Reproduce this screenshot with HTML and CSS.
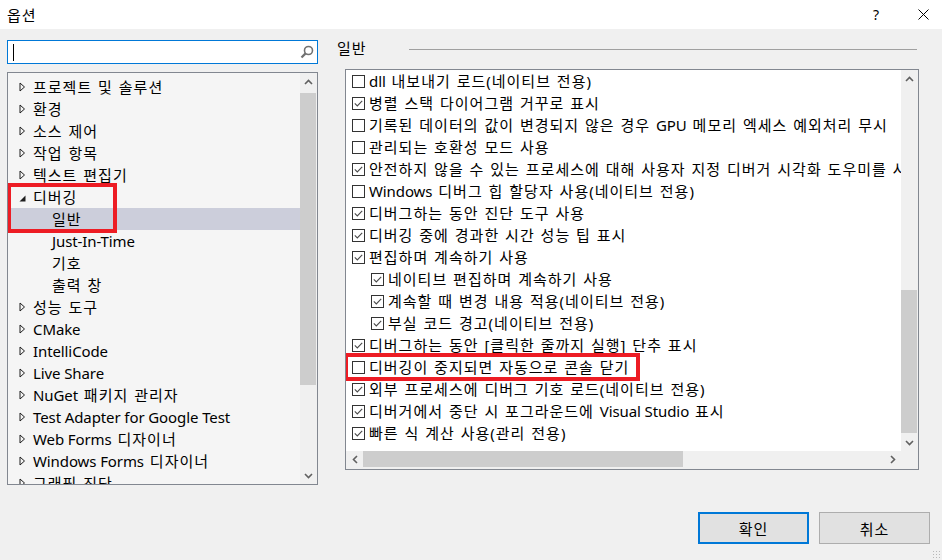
FILE: index.html
```html
<!DOCTYPE html>
<html lang="ko">
<head>
  <meta charset="UTF-8" />
  <title>옵션</title>
  <link rel="stylesheet" href="styles.css">
</head>
<body>
  <svg class="defs" width="0" height="0">
    <symbol id="cb-on" viewBox="0 0 13 13">
      <rect x="0.5" y="0.5" width="12" height="12" fill="#fff" stroke="#333"/>
      <polyline points="2.8,6.4 5.3,8.9 10.2,3.8" fill="none" stroke="#4a4a4a" stroke-width="1.1"/>
    </symbol>
    <symbol id="cb-off" viewBox="0 0 13 13">
      <rect x="0.5" y="0.5" width="12" height="12" fill="#fff" stroke="#333"/>
    </symbol>
    <symbol id="tw-closed" viewBox="0 0 7 10">
      <polygon points="1,1 5.5,5 1,9" fill="none" stroke="#1e1e1e"/>
    </symbol>
    <symbol id="tw-open" viewBox="0 0 7 7">
      <polygon points="6.5,0.5 6.5,6.5 0.5,6.5" fill="#1e1e1e"/>
    </symbol>
    <symbol id="chev-up" viewBox="0 0 9 6">
      <polyline points="1,5 4.5,1.5 8,5" fill="none" stroke="#606060" stroke-width="1.6"/>
    </symbol>
    <symbol id="chev-down" viewBox="0 0 9 6">
      <polyline points="1,1 4.5,4.5 8,1" fill="none" stroke="#606060" stroke-width="1.6"/>
    </symbol>
    <symbol id="chev-left" viewBox="0 0 6 9">
      <polyline points="5,1 1.5,4.5 5,8" fill="none" stroke="#606060" stroke-width="1.6"/>
    </symbol>
    <symbol id="chev-right" viewBox="0 0 6 9">
      <polyline points="1,1 4.5,4.5 1,8" fill="none" stroke="#606060" stroke-width="1.6"/>
    </symbol>
  </svg>

  <div class="titlebar">
    <span class="title">옵션</span>
    <span class="help">?</span>
    <span class="close">
      <svg width="11" height="11" viewBox="0 0 11 11"><path d="M0.5 0.5 L10.5 10.5 M10.5 0.5 L0.5 10.5" stroke="#000" stroke-width="1"/></svg>
    </span>
  </div>

  <div class="main">
    <!-- left: search + tree -->
    <div class="left">
      <div class="search">
        <span class="caret"></span>
        <svg class="search-icon" width="14" height="14" viewBox="0 0 14 14">
          <circle cx="8.5" cy="5.5" r="4" fill="none" stroke="#717171" stroke-width="1.6"/>
          <path d="M5.6 8.4 L1.5 12.5" stroke="#717171" stroke-width="2.2"/>
        </svg>
      </div>

      <div class="tree">
        <div class="tree-items">
          <div class="node"><svg class="tw"><use href="#tw-closed"/></svg>프로젝트 및 솔루션</div>
          <div class="node"><svg class="tw"><use href="#tw-closed"/></svg>환경</div>
          <div class="node"><svg class="tw"><use href="#tw-closed"/></svg>소스 제어</div>
          <div class="node"><svg class="tw"><use href="#tw-closed"/></svg>작업 항목</div>
          <div class="node"><svg class="tw"><use href="#tw-closed"/></svg>텍스트 편집기</div>
          <div class="node"><svg class="tw open"><use href="#tw-open"/></svg>디버깅</div>
          <div class="node child selected">일반</div>
          <div class="node child"><span class="en">Just-In-Time</span></div>
          <div class="node child">기호</div>
          <div class="node child">출력 창</div>
          <div class="node"><svg class="tw"><use href="#tw-closed"/></svg>성능 도구</div>
          <div class="node"><svg class="tw"><use href="#tw-closed"/></svg><span class="en">CMake</span></div>
          <div class="node"><svg class="tw"><use href="#tw-closed"/></svg><span class="en">IntelliCode</span></div>
          <div class="node"><svg class="tw"><use href="#tw-closed"/></svg><span class="en">Live Share</span></div>
          <div class="node"><svg class="tw"><use href="#tw-closed"/></svg><span class="en">NuGet</span>&nbsp;패키지 관리자</div>
          <div class="node"><svg class="tw"><use href="#tw-closed"/></svg><span class="en">Test Adapter for Google Test</span></div>
          <div class="node"><svg class="tw"><use href="#tw-closed"/></svg><span class="en">Web Forms</span>&nbsp;디자이너</div>
          <div class="node"><svg class="tw"><use href="#tw-closed"/></svg><span class="en">Windows Forms</span>&nbsp;디자이너</div>
          <div class="node"><svg class="tw"><use href="#tw-closed"/></svg>그래픽 진단</div>
          <div class="mark tree-mark"></div>
        </div>
        <div class="vscroll">
          <div class="sbtn"><svg class="chev-v"><use href="#chev-up"/></svg></div>
          <div class="track"><div class="thumb tree-thumb"></div></div>
          <div class="sbtn"><svg class="chev-v"><use href="#chev-down"/></svg></div>
        </div>
      </div>
    </div>

    <!-- right: options page -->
    <div class="right">
      <div class="heading">
        <span>일반</span>
        <div class="rule"></div>
      </div>

      <div class="list">
        <div class="list-items">
          <div class="opt"><svg class="cb"><use href="#cb-off"/></svg><span class="en">dll</span>&nbsp;내보내기 로드(네이티브 전용)</div>
          <div class="opt"><svg class="cb"><use href="#cb-on"/></svg>병렬 스택 다이어그램 거꾸로 표시</div>
          <div class="opt"><svg class="cb"><use href="#cb-off"/></svg>기록된 데이터의 값이 변경되지 않은 경우&nbsp;<span class="en">GPU</span>&nbsp;메모리 엑세스 예외처리 무시</div>
          <div class="opt"><svg class="cb"><use href="#cb-off"/></svg>관리되는 호환성 모드 사용</div>
          <div class="opt"><svg class="cb"><use href="#cb-on"/></svg>안전하지 않을 수 있는 프로세스에 대해 사용자 지정 디버거 시각화 도우미를 사용</div>
          <div class="opt"><svg class="cb"><use href="#cb-off"/></svg><span class="en">Windows</span>&nbsp;디버그 힙 할당자 사용(네이티브 전용)</div>
          <div class="opt"><svg class="cb"><use href="#cb-on"/></svg>디버그하는 동안 진단 도구 사용</div>
          <div class="opt"><svg class="cb"><use href="#cb-on"/></svg>디버깅 중에 경과한 시간 성능 팁 표시</div>
          <div class="opt"><svg class="cb"><use href="#cb-on"/></svg>편집하며 계속하기 사용</div>
          <div class="opt sub"><svg class="cb"><use href="#cb-on"/></svg>네이티브 편집하며 계속하기 사용</div>
          <div class="opt sub"><svg class="cb"><use href="#cb-on"/></svg>계속할 때 변경 내용 적용(네이티브 전용)</div>
          <div class="opt sub"><svg class="cb"><use href="#cb-on"/></svg>부실 코드 경고(네이티브 전용)</div>
          <div class="opt"><svg class="cb"><use href="#cb-on"/></svg>디버그하는 동안 [클릭한 줄까지 실행] 단추 표시</div>
          <div class="opt"><svg class="cb"><use href="#cb-off"/></svg>디버깅이 중지되면 자동으로 콘솔 닫기</div>
          <div class="opt"><svg class="cb"><use href="#cb-on"/></svg>외부 프로세스에 디버그 기호 로드(네이티브 전용)</div>
          <div class="opt"><svg class="cb"><use href="#cb-on"/></svg>디버거에서 중단 시 포그라운드에&nbsp;<span class="en">Visual Studio</span>&nbsp;표시</div>
          <div class="opt"><svg class="cb"><use href="#cb-on"/></svg>빠른 식 계산 사용(관리 전용)</div>
          <div class="mark list-mark"></div>
        </div>
        <div class="vscroll">
          <div class="sbtn"><svg class="chev-v"><use href="#chev-up"/></svg></div>
          <div class="track"><div class="thumb list-thumb"></div></div>
          <div class="sbtn"><svg class="chev-v"><use href="#chev-down"/></svg></div>
        </div>
        <div class="hscroll">
          <div class="sbtn"><svg class="chev-h"><use href="#chev-left"/></svg></div>
          <div class="htrack"><div class="hthumb"></div></div>
          <div class="sbtn"><svg class="chev-h"><use href="#chev-right"/></svg></div>
        </div>
        <div class="corner"></div>
      </div>
    </div>
  </div>

  <div class="footer">
    <button class="btn primary">확인</button>
    <button class="btn">취소</button>
  </div>
  <div class="grip"></div>
</body>
</html>
```

FILE: styles.css
```css
* {
  box-sizing: border-box;
}

html, body {
  margin: 0;
  padding: 0;
}

body {
  width: 942px;
  height: 560px;
  overflow: hidden;
  position: relative;
  background: #f0f0f0;
  color: #000;
  font-family: "Noto Sans", "Noto Sans CJK KR", sans-serif;
  font-size: 15px;
  letter-spacing: 1px;
  word-spacing: 1px;
}

/* latin runs are set tighter than the hangul around them */
.en {
  letter-spacing: -0.1px;
  word-spacing: 0;
}

.defs {
  position: absolute;
  width: 0;
  height: 0;
}

/* title bar */
.titlebar {
  height: 29px;
  background: #fff;
  display: flex;
  align-items: center;
  padding-left: 7px;
}

.title {
  line-height: 16px;
}

.help {
  margin-left: auto;
  font-size: 14px;
  line-height: 16px;
  width: 10px;
  margin-right: 35px;
}

.close {
  width: 11px;
  height: 11px;
  margin-right: 13px;
  display: flex;
}

/* main area */
.main {
  display: flex;
  padding: 11px 0 0 7px;
}

.left {
  width: 311px;
}

.search {
  height: 24px;
  background: #fff;
  border: 1px solid #0078d7;
  display: flex;
  align-items: center;
  padding-left: 5px;
  padding-right: 3px;
}

.caret {
  width: 1px;
  height: 17px;
  background: #000;
}

.search-icon {
  margin-left: auto;
}

.tree {
  margin-top: 8px;
  height: 413px;
  border: 1px solid #828790;
  background: #f5f5f5;
  display: flex;
}

.tree-items {
  flex: 1;
  padding-top: 3px;
  position: relative;
  overflow: hidden;
}

.node {
  height: 22px;
  line-height: 22px;
  padding-left: 25px;
  white-space: nowrap;
  display: flex;
  align-items: center;
}

.node .tw {
  width: 7px;
  height: 10px;
  margin-left: -14px;
  margin-right: 7px;
}

.node .tw.open {
  width: 7px;
  height: 7px;
  margin-top: 3px;
}

.node.child {
  padding-left: 44px;
}

.node.selected {
  background: #cccedb;
}

/* red highlight frames */
.mark {
  position: absolute;
  border: 4px solid #ed1c24;
}

.tree-mark {
  left: -1px;
  top: 110px;
  width: 110px;
  height: 50px;
}

.list-mark {
  left: -2px;
  top: 283px;
  width: 296px;
  height: 28px;
}

/* scrollbars */
.vscroll {
  width: 17px;
  background: #f0f0f0;
  display: flex;
  flex-direction: column;
}

.sbtn {
  width: 17px;
  height: 17px;
  display: flex;
  align-items: center;
  justify-content: center;
  flex: none;
}

.chev-v {
  width: 9px;
  height: 6px;
}

.chev-h {
  width: 6px;
  height: 9px;
}

.track {
  flex: 1;
  position: relative;
}

.thumb {
  position: absolute;
  left: 0;
  right: 1px;
  background: #cdcdcd;
}

.tree-thumb {
  top: 3px;
  height: 292px;
}

.list-thumb {
  top: 203px;
  height: 143px;
}

/* options list */
.right {
  margin-left: 19px;
}

.heading {
  display: flex;
  align-items: center;
  height: 16px;
  line-height: 16px;
}

.rule {
  width: 508px;
  height: 1px;
  background: #a0a0a0;
  margin-left: 42px;
  margin-top: 2px;
}

.list {
  margin-top: 13px;
  margin-left: 8px;
  width: 574px;
  height: 401px;
  border: 1px solid #828790;
  display: grid;
  grid-template-columns: 555px 17px;
  grid-template-rows: 381px 17px;
  background: #f0f0f0;
}

.list-items {
  background: #fff;
  position: relative;
  overflow: hidden;
}

.opt {
  height: 22px;
  line-height: 22px;
  padding-left: 6px;
  white-space: nowrap;
  display: flex;
  align-items: center;
}

.opt.sub {
  padding-left: 25px;
}

.cb {
  width: 13px;
  height: 13px;
  flex: none;
  margin-right: 4px;
}

.hscroll {
  display: flex;
  background: #f0f0f0;
}

.htrack {
  flex: 1;
  position: relative;
}

.hthumb {
  position: absolute;
  top: 0;
  bottom: 1px;
  left: 0;
  width: 320px;
  background: #cdcdcd;
}

.corner {
  background: #f0f0f0;
}

/* buttons */
.footer {
  display: flex;
  justify-content: flex-end;
  gap: 10px;
  padding-right: 12px;
  margin-top: 27px;
}

.btn {
  width: 111px;
  height: 32px;
  background: #e1e1e1;
  border: 1px solid #adadad;
  font-family: "Noto Sans", "Noto Sans CJK KR", sans-serif;
  font-size: 15px;
  letter-spacing: 1px;
  color: #000;
  padding: 0;
}

.btn.primary {
  border: 2px solid #0078d7;
}

.grip {
  position: absolute;
  right: 2px;
  bottom: 2px;
  width: 8px;
  height: 8px;
  background: radial-gradient(circle, #b8b8b8 0.8px, transparent 1px) 0 0 / 3px 3px;
}
```
